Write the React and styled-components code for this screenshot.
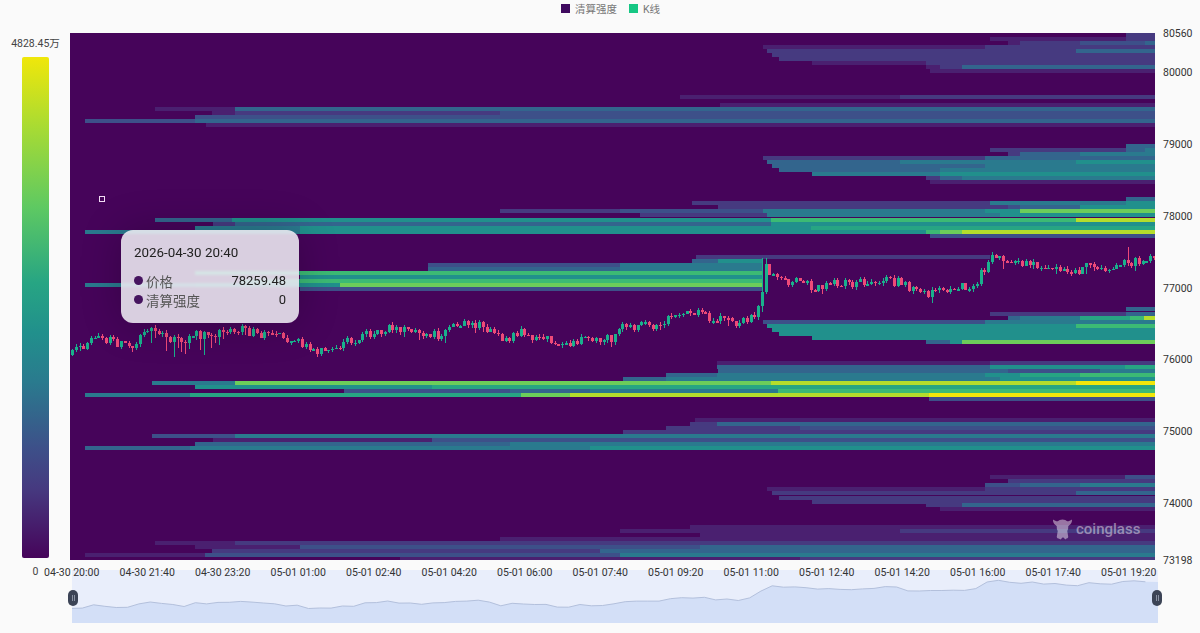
import styled, { createGlobalStyle } from "styled-components";

const FONT = `Roboto, "Noto Sans CJK SC", "Noto Sans", sans-serif`;

// heat levels, 0 is the empty cell
const LEVELS = [
  "#46045a", "#4a2070", "#463a80", "#3d5089", "#33658d", "#2a7a8e",
  "#21908c", "#27a583", "#3cba74", "#6ccd5a", "#b4dd2c", "#f0e70a",
];

// [y, x0, level0, x1, level1, ...], level 0 closes the row
const ROWS = [
  [33, 1126, 2],
  [37, 990, 1, 1126, 2],
  [41, 1008, 1, 1020, 2, 1080, 3, 1145, 4],
  [45, 763, 1, 985, 2],
  [49, 767, 2, 1076, 4],
  [53, 772, 2],
  [57, 779, 2],
  [61, 812, 1, 926, 2],
  [65, 926, 1, 940, 2, 962, 4],
  [69, 930, 1],

  [95, 680, 1, 900, 2],
  [103, 720, 1],
  [107, 155, 1, 235, 4],
  [111, 212, 1, 235, 2, 500, 3],
  [115, 195, 3],
  [119, 85, 3, 195, 4],
  [123, 206, 1],

  [144, 1126, 4],
  [148, 990, 2, 1126, 4, 1145, 5],
  [152, 1008, 2, 1020, 4, 1080, 5],
  [156, 763, 2, 985, 4],
  [160, 767, 4, 900, 5, 1076, 6],
  [164, 772, 4, 985, 5],
  [168, 779, 4, 940, 5],
  [172, 812, 5, 940, 6],
  [176, 926, 2, 940, 4, 962, 5],
  [180, 930, 1],

  [197, 1126, 4],
  [201, 692, 2, 990, 5, 1126, 6],
  [205, 718, 2, 1008, 3, 1020, 4, 1080, 6],
  [209, 500, 2, 620, 3, 763, 5, 985, 6, 1020, 9],
  [213, 640, 2, 767, 5, 1000, 6],
  [218, 155, 4, 232, 6, 771, 8, 1076, 10],
  [222, 213, 2, 235, 4, 771, 6],
  [226, 195, 5, 300, 6, 811, 7],
  [230, 85, 5, 300, 6, 926, 8, 940, 9, 962, 10],
  [234, 930, 3],

  [255, 696, 2, 990, 0],
  [259, 692, 4, 718, 6, 763, 0],
  [263, 428, 3, 620, 5, 763, 0],
  [267, 428, 4, 620, 5, 763, 0],
  [271, 195, 7, 300, 8, 763, 0],
  [275, 300, 6, 763, 0],
  [279, 240, 7, 300, 8, 763, 0],
  [283, 85, 5, 195, 6, 340, 9, 763, 0],
  [287, 300, 3, 763, 0],

  [307, 1126, 4],
  [312, 990, 2, 1126, 4],
  [316, 1008, 4, 1020, 5, 1080, 7, 1130, 8, 1144, 10],
  [320, 763, 3, 985, 5],
  [324, 767, 6, 1076, 8],
  [328, 772, 6],
  [332, 779, 6],
  [336, 812, 6],
  [340, 926, 4, 950, 6, 962, 9],

  [361, 717, 1, 990, 2],
  [365, 717, 4, 990, 6, 1125, 7],
  [369, 718, 4, 1008, 3, 1100, 5],
  [373, 666, 4, 717, 5, 985, 6, 1020, 7, 1080, 8],
  [377, 623, 4, 666, 5, 1000, 6],
  [381, 152, 5, 235, 9, 771, 10, 1076, 11],
  [385, 195, 6, 432, 7, 778, 7],
  [389, 195, 0, 344, 3, 510, 4, 590, 5, 778, 8],
  [393, 85, 5, 190, 7, 521, 9, 570, 10, 929, 11],
  [397, 929, 3],

  [418, 695, 1],
  [422, 690, 2, 717, 4],
  [426, 666, 2, 800, 3],
  [430, 623, 2],
  [434, 152, 3, 235, 5],
  [438, 213, 1, 432, 3],
  [442, 195, 4, 510, 5],
  [446, 85, 4, 190, 5, 590, 6],

  [475, 990, 1, 1125, 3],
  [479, 1008, 2],
  [483, 985, 3, 1020, 4, 1080, 5],
  [487, 767, 1, 985, 2],
  [491, 772, 2, 1076, 4],
  [496, 779, 2],
  [500, 812, 2],
  [503, 926, 2, 962, 4],
  [507, 940, 1],

  [525, 690, 1],
  [529, 620, 1, 900, 2],
  [533, 700, 1],
  [537, 500, 1],
  [541, 155, 1, 235, 2],
  [545, 195, 1, 300, 3, 700, 4],
  [549, 212, 2, 600, 4],
  [553, 85, 1, 205, 3, 620, 5],
  [557, 400, 1, 800, 2],
];

// hand read price curve, in page pixels
const CURVE = [
  [70, 355], [85, 342], [100, 340], [115, 342], [130, 345], [145, 330], [150, 325], [165, 335],
  [180, 345], [195, 335], [210, 335], [225, 330], [240, 330], [255, 333], [270, 336], [290, 338],
  [305, 345], [320, 352], [340, 345], [355, 338], [375, 332], [395, 328], [415, 330], [435, 336],
  [450, 327], [470, 323], [490, 330], [505, 340], [520, 333], [545, 340], [565, 345], [585, 340],
  [610, 338], [620, 328], [640, 325], [655, 325], [670, 318], [695, 312], [710, 318], [735, 322],
  [755, 318], [761, 290], [763, 265], [770, 272], [780, 282], [800, 282], [815, 288], [830, 284],
  [860, 283], [885, 281], [900, 283], [915, 292], [925, 295], [945, 290], [960, 288], [975, 282],
  [985, 265], [992, 256], [1010, 263], [1035, 266], [1060, 272], [1075, 274], [1083, 262],
  [1095, 268], [1110, 270], [1125, 262], [1155, 260],
];

const priceAt = (x) => {
  for (let i = 1; i < CURVE.length; i++) {
    const [x0, y0] = CURVE[i - 1];
    const [x1, y1] = CURVE[i];
    if (x <= x1) return y0 + ((y1 - y0) * (x - x0)) / (x1 - x0);
  }
  return CURVE[CURVE.length - 1][1];
};

let seed = 77;
const rand = () => {
  seed = (seed * 16807) % 2147483647;
  return seed / 2147483647;
};

const candles = [];
let lastClose = 355;
for (let x = 71; x < 1153; x += 3.77) {
  const open = lastClose;
  const close = priceAt(x) + (rand() - 0.5) * 9;
  lastClose = close;
  const top = Math.min(open, close);
  const bottom = Math.max(open, close);
  const rough = x > 150 && x < 225;
  candles.push({
    x,
    close,
    top,
    height: Math.max(bottom - top, 1.5),
    high: x > 1123 && x < 1127 ? 247 : x > 760 && x < 765 ? 258 : top - rand() * 3,
    low: bottom + rand() * (rough ? 18 : rand() > 0.85 ? 8 : 3),
    up: close < open,
  });
}

const sliderLine = candles
  .filter((_, i) => i % 3 === 0)
  .map((c) => `${(c.x - 72).toFixed(1)},${((c.close - 345) * 0.3 + 37).toFixed(1)}`)
  .join(" ");

const Y_TICKS = [
  ["80560", 39], ["80000", 72], ["79000", 72], ["78000", 72], ["77000", 71],
  ["76000", 72], ["75000", 72], ["74000", 57], ["73198", 16],
];

const X_TICKS = [
  "04-30 20:00", "04-30 21:40", "04-30 23:20", "05-01 01:00", "05-01 02:40",
  "05-01 04:20", "05-01 06:00", "05-01 07:40", "05-01 09:20", "05-01 11:00",
  "05-01 12:40", "05-01 14:20", "05-01 16:00", "05-01 17:40", "05-01 19:20",
];

const Global = createGlobalStyle`
  html, body { margin: 0; padding: 0; background: #fafafa; }
`;

const Page = styled.div`
  width: 1200px;
  height: 633px;
  overflow: hidden;
  background: #fafafa;
  font-family: ${FONT};
  color: #333;
`;

const Legend = styled.div`
  height: 33px;
  padding: 0 0 17px 21px;
  box-sizing: border-box;
  display: flex;
  justify-content: center;
  align-items: center;
  font-size: 10.5px;
  color: #777;
`;

const LegendItem = styled.div`
  display: flex;
  align-items: center;
  gap: 5px;
  margin: 0 6px;
`;

const Swatch = styled.span`
  width: 9px;
  height: 9px;
  background: ${(p) => p.$color};
`;

const Main = styled.div`
  display: flex;
  height: 527px;
`;

const Side = styled.div`
  width: 70px;
  padding-left: 1px;
  box-sizing: border-box;
  display: flex;
  flex-direction: column;
  align-items: center;
  font-size: 10.5px;
  color: #444;
`;

const MaxLabel = styled.div`
  height: 20px;
  line-height: 22px;
  margin-bottom: 4px;
  white-space: nowrap;
`;

const ColorBar = styled.div`
  width: 27px;
  height: 501px;
  flex: none;
  border-radius: 2px;
  background: linear-gradient(
    to bottom,
    #f0e70a 0%,
    #a8db33 14%,
    #5ec962 30%,
    #27a583 45%,
    #21908c 55%,
    #2a7a8e 65%,
    #3d5089 78%,
    #463a80 86%,
    #46045a 100%
  );
`;

const MinLabel = styled.div`
  margin-top: 6px;
  line-height: 16px;
`;

const Chart = styled.div`
  position: relative;
  width: 1085px;
  height: 527px;
  flex: none;
`;

const Heat = styled.svg`
  display: block;
  width: 1085px;
  height: 527px;
`;

const Tooltip = styled.div`
  position: absolute;
  left: 51px;
  top: 197px;
  width: 178px;
  height: 93px;
  box-sizing: border-box;
  padding: 13px 13px 0;
  border-radius: 12px;
  background: rgba(238, 236, 242, 0.88);
  backdrop-filter: blur(1px);
  box-shadow: 0 0 40px rgba(0, 0, 0, 0.22);
`;

const TipDate = styled.div`
  font-size: 13.4px;
  line-height: 20px;
  color: #222;
  margin-bottom: 8px;
`;

const TipRow = styled.div`
  display: flex;
  align-items: center;
  height: 19px;
`;

const TipDot = styled.span`
  width: 9px;
  height: 9px;
  border-radius: 50%;
  background: #46145f;
  margin-right: 3px;
`;

const TipName = styled.span`
  flex: 1;
  font-size: 13.5px;
  color: #555;
`;

const TipValue = styled.span`
  font-size: 13px;
  color: #222;
`;

const Marker = styled.div`
  position: absolute;
  left: 29px;
  top: 163px;
  width: 6px;
  height: 6px;
  box-sizing: border-box;
  border: 1px solid #f2dcf5;
  background: #46045a;
`;

const Watermark = styled.div`
  position: absolute;
  left: 982px;
  top: 484px;
  display: flex;
  align-items: center;
  gap: 3px;
  font-size: 15px;
  font-weight: 500;
  color: rgba(255, 255, 255, 0.45);
`;

const YAxis = styled.div`
  margin-top: -7px;
  padding-left: 8px;
  display: flex;
  flex-direction: column;
  font-size: 10.5px;
`;

const YTick = styled.div`
  height: ${(p) => p.$h}px;
  line-height: 16px;
  flex: none;
`;

const XAxis = styled.div`
  position: relative;
  z-index: 1;
  margin: 5px 0 0 34px;
  display: grid;
  grid-template-columns: repeat(15, 75.5px);
  font-size: 10.5px;
  line-height: 16px;
  text-align: center;
  white-space: nowrap;
`;

const Slider = styled.div`
  position: relative;
  margin: -11px 0 0 72px;
  width: 1086px;
  height: 53px;
  background: #e9eefb;
`;

const SliderArea = styled.svg`
  display: block;
  width: 1086px;
  height: 53px;
`;

const Handle = styled.div`
  position: absolute;
  top: 20px;
  left: ${(p) => p.$left}px;
  width: 10px;
  height: 16px;
  border-radius: 5px;
  background: #3c4456;
  display: flex;
  align-items: center;
  justify-content: center;
  gap: 1px;

  &::before,
  &::after {
    content: "";
    width: 1px;
    height: 6px;
    background: #8a92a3;
  }
`;

function Mascot() {
  return (
    <svg width="21" height="24" viewBox="0 0 22 24" fill="currentColor">
      <path d="M1 2c2 1 3 2 5 2 1-1 3-2 5-2s4 1 5 2c2 0 3-1 5-2 0 3-1 5-3 6l-1 1c0 2 0 3-1 5l1 6c0 1-1 2-2 2l-1 1-2-2h-1l-2 2-2-1c-1 0-2-1-2-2l1-6c-1-2-1-3-1-5l-1-1C2 7 1 5 1 2z" />
    </svg>
  );
}

function HeatRow({ row }) {
  const [y, ...rest] = row;
  const cells = [];
  for (let i = 0; i < rest.length; i += 2) {
    const end = i + 2 < rest.length ? rest[i + 2] : 1155;
    if (rest[i + 1] > 0) {
      cells.push(
        <rect key={i} x={rest[i]} y={y} width={end - rest[i]} height={4.2} fill={LEVELS[rest[i + 1]]} />
      );
    }
  }
  return cells;
}

export default function App() {
  return (
    <Page>
      <Global />
      <Legend>
        <LegendItem>
          <Swatch $color="#3f0a5f" />
          清算强度
        </LegendItem>
        <LegendItem>
          <Swatch $color="#16c784" />
          K线
        </LegendItem>
      </Legend>

      <Main>
        <Side>
          <MaxLabel>4828.45万</MaxLabel>
          <ColorBar />
          <MinLabel>0</MinLabel>
        </Side>

        <Chart>
          <Heat viewBox="70 33 1085 527" shapeRendering="crispEdges">
            <defs>
              <pattern id="cells" x="70" y="33" width="3.77" height="4" patternUnits="userSpaceOnUse">
                <path d="M3.77 0V4H0" fill="none" stroke="rgba(0,0,0,0.05)" strokeWidth="0.5" />
              </pattern>
            </defs>
            <rect x="70" y="33" width="1085" height="527" fill={LEVELS[0]} />
            {ROWS.map((row) => (
              <HeatRow key={row[0]} row={row} />
            ))}
            <rect x="70" y="33" width="1085" height="527" fill="url(#cells)" />
            {candles.map((c) => (
              <g key={c.x} fill={c.up ? "#1ab08c" : "#ee4a78"}>
                <rect x={c.x + 1} y={c.high} width="1" height={c.low - c.high} />
                <rect x={c.x} y={c.top} width="3" height={c.height} />
              </g>
            ))}
          </Heat>
          <Marker />
          <Watermark>
            <Mascot />
            coinglass
          </Watermark>
          <Tooltip>
            <TipDate>2026-04-30 20:40</TipDate>
            <TipRow>
              <TipDot />
              <TipName>价格</TipName>
              <TipValue>78259.48</TipValue>
            </TipRow>
            <TipRow>
              <TipDot />
              <TipName>清算强度</TipName>
              <TipValue>0</TipValue>
            </TipRow>
          </Tooltip>
        </Chart>

        <YAxis>
          {Y_TICKS.map(([label, h]) => (
            <YTick key={label} $h={h}>
              {label}
            </YTick>
          ))}
        </YAxis>
      </Main>

      <XAxis>
        {X_TICKS.map((t) => (
          <span key={t}>{t}</span>
        ))}
      </XAxis>

      <Slider>
        <SliderArea viewBox="0 0 1086 53">
          <polygon points={`0,53 0,42 ${sliderLine} 1086,12 1086,53`} fill="#d3dff7" />
          <polyline points={sliderLine} fill="none" stroke="#b3c0dc" strokeWidth="1" />
        </SliderArea>
        <Handle $left={-4} />
        <Handle $left={1080} />
      </Slider>
    </Page>
  );
}
